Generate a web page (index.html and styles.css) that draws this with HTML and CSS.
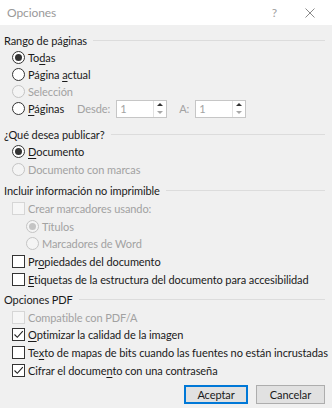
FILE: index.html
```html
<!DOCTYPE html>
<html lang="es">
<head>
    <meta charset="UTF-8">
    <meta name="viewport" content="width=device-width, initial-scale=1.0">
    <title>Opciones</title>
    <link rel="stylesheet" href="styles.css">
</head>
<body>
    <div class="dialog">
        <div class="titlebar">
            <span class="title">Opciones</span>
            <span class="help">?</span>
            <svg class="close" width="10" height="10" viewBox="0 0 10 10">
                <path d="M0.5 0.5 L9.5 9.5 M9.5 0.5 L0.5 9.5" stroke="#8a8a8a" stroke-width="1" fill="none"/>
            </svg>
        </div>

        <div class="content">
            <div class="section range">
                <div class="group-title">Rango de páginas</div>
                <div class="row"><span class="radio checked"></span><span>To<u>d</u>as</span></div>
                <div class="row"><span class="radio"></span><span>Página <u>a</u>ctual</span></div>
                <div class="row disabled"><span class="radio"></span><span>Selección</span></div>
                <div class="row">
                    <span class="radio"></span><span><u>P</u>áginas</span>
                    <span class="muted from">Desde:</span>
                    <span class="spin">
                        <span class="spin-value">1</span>
                        <span class="spin-arrows"><span class="arrow-up"></span><span class="arrow-down"></span></span>
                    </span>
                    <span class="muted to">A:</span>
                    <span class="spin">
                        <span class="spin-value">1</span>
                        <span class="spin-arrows"><span class="arrow-up"></span><span class="arrow-down"></span></span>
                    </span>
                </div>
            </div>

            <div class="section publish">
                <div class="group-title">¿Qué desea publicar?</div>
                <div class="row"><span class="radio checked"></span><span><u>D</u>ocumento</span></div>
                <div class="row disabled"><span class="radio"></span><span>Documento con marcas</span></div>
            </div>

            <div class="section extras">
                <div class="group-title">Incluir información no imprimible</div>
                <div class="row disabled"><span class="check"></span><span>Crear marcadores usando:</span></div>
                <div class="row sub disabled"><span class="radio checked"></span><span>Títulos</span></div>
                <div class="row sub disabled"><span class="radio"></span><span>Marcadores de Word</span></div>
                <div class="row"><span class="check"></span><span>Pr<u>o</u>piedades del documento</span></div>
                <div class="row"><span class="check"></span><span><u>E</u>tiquetas de la estructura del documento para accesibilidad</span></div>
            </div>

            <div class="section pdf">
                <div class="group-title">Opciones PDF</div>
                <div class="row disabled"><span class="check"></span><span>Compatible con PDF/A</span></div>
                <div class="row">
                    <span class="check"><svg width="11" height="11" viewBox="0 0 11 11"><path d="M1.5 5.5 L4.3 8.3 L9.8 2.2" stroke="#222" stroke-width="1.1" fill="none"/></svg></span>
                    <span><u>O</u>ptimizar la calidad de la imagen</span>
                </div>
                <div class="row"><span class="check"></span><span>Te<u>x</u>to de mapas de bits cuando las fuentes no están incrustadas</span></div>
                <div class="row">
                    <span class="check"><svg width="11" height="11" viewBox="0 0 11 11"><path d="M1.5 5.5 L4.3 8.3 L9.8 2.2" stroke="#222" stroke-width="1.1" fill="none"/></svg></span>
                    <span>Cifrar el docume<u>n</u>to con una contraseña</span>
                </div>
            </div>

            <div class="buttons">
                <button class="btn default">Aceptar</button>
                <button class="btn">Cancelar</button>
            </div>
        </div>
    </div>
</body>
</html>
```

FILE: styles.css
```css
body {
    margin: 0;
    font-family: Lato, 'Open Sans', sans-serif;
    font-size: 11px;
    letter-spacing: -0.08px;
    color: #1a1a1a;
    background-color: #f0f0f0;
}

.dialog {
    width: 332px;
    height: 408px;
    overflow: hidden;
    background-color: #f0f0f0;
}

.titlebar {
    height: 25px;
    background-color: #ffffff;
    display: flex;
    align-items: center;
    padding-left: 7px;
}

.title {
    color: #9a9a9a;
    font-size: 12px;
    flex: 1;
}

.help {
    color: #a0a0a0;
    font-size: 12px;
    margin-right: 28px;
}

.close {
    margin-right: 17px;
}

.content {
    padding: 6px 7px 0 4px;
}

.section.publish {
    margin-top: 8px;
}

.section.extras {
    margin-top: 3px;
}

.section.pdf {
    margin-top: 2px;
}

.group-title {
    display: flex;
    align-items: center;
    gap: 6px;
    height: 18px;
}

.group-title::after {
    content: "";
    flex: 1;
    height: 1px;
    background-color: #dcdcdc;
}

.row {
    display: flex;
    align-items: center;
    gap: 3px;
    height: 17.75px;
    padding-left: 8px;
    white-space: nowrap;
}

.range .row {
    height: 17px;
}

.row.sub {
    padding-left: 22px;
}

.row u {
    text-decoration-thickness: 1px;
    text-underline-offset: 2px;
}

.row.disabled {
    color: #a2a2a2;
}

.radio {
    width: 13px;
    height: 13px;
    box-sizing: border-box;
    border: 1px solid #333333;
    border-radius: 50%;
    background-color: #ffffff;
    display: flex;
    align-items: center;
    justify-content: center;
    flex-shrink: 0;
}

.radio.checked::after {
    content: "";
    width: 7px;
    height: 7px;
    border-radius: 50%;
    background-color: #333333;
}

.disabled .radio {
    border-color: #c4c4c4;
    background-color: #f4f4f4;
}

.disabled .radio.checked::after {
    background-color: #c4c4c4;
}

.check {
    width: 13px;
    height: 13px;
    box-sizing: border-box;
    border: 1px solid #333333;
    background-color: #ffffff;
    display: flex;
    align-items: center;
    justify-content: center;
    flex-shrink: 0;
}

.disabled .check {
    border-color: #d6d6d6;
    background-color: #f6f6f6;
}

.muted {
    color: #a2a2a2;
}

.from {
    margin-left: 10px;
}

.to {
    margin-left: 9px;
}

.spin {
    display: flex;
    width: 51px;
    height: 18px;
    box-sizing: border-box;
    border: 1px solid #c6c6c6;
    background-color: #ffffff;
    margin-left: 3px;
}

.spin-value {
    flex: 1;
    color: #a2a2a2;
    padding-left: 3px;
    line-height: 16px;
}

.spin-arrows {
    width: 12px;
    display: flex;
    flex-direction: column;
    border-left: 1px solid #e2e2e2;
}

.arrow-up,
.arrow-down {
    flex: 1;
    display: flex;
    align-items: center;
    justify-content: center;
}

.arrow-up::after {
    content: "";
    border-left: 3px solid transparent;
    border-right: 3px solid transparent;
    border-bottom: 3px solid #333333;
}

.arrow-down::after {
    content: "";
    border-left: 3px solid transparent;
    border-right: 3px solid transparent;
    border-top: 3px solid #a8a8a8;
}

.buttons {
    display: flex;
    justify-content: flex-end;
    gap: 8px;
    margin-top: 6px;
}

.btn {
    font-family: inherit;
    font-size: 11px;
    letter-spacing: -0.08px;
    color: #1a1a1a;
    height: 19px;
    padding: 0;
    background-color: #e1e1e1;
    border: 1px solid #adadad;
    width: 69px;
}

.btn.default {
    width: 64px;
    border: 2px solid #0078d7;
}
```
